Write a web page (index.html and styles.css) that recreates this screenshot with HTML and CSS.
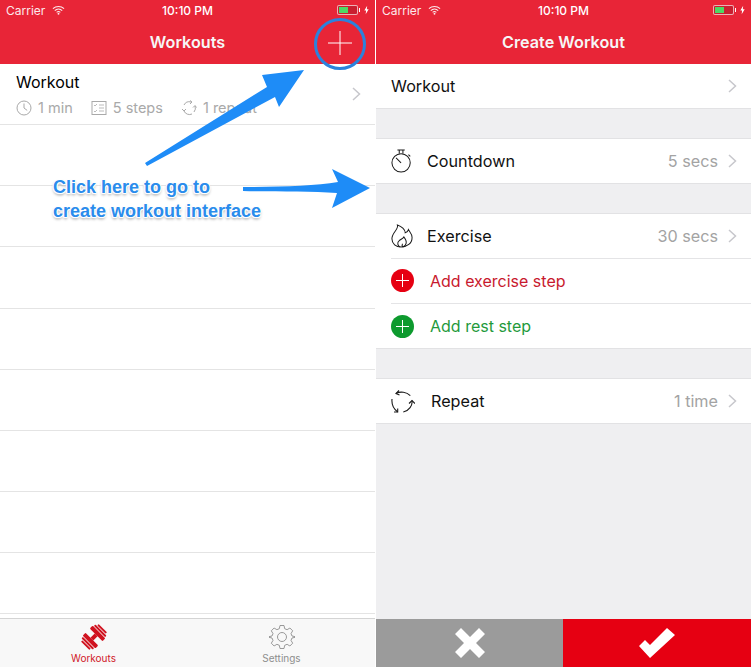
FILE: index.html
```html
<!DOCTYPE html>
<html>
<head>
    <title>Workouts</title>
    <link rel="stylesheet" href="styles.css">
</head>
<body>
<div class="shot">

    <!-- left phone: workouts list -->
    <div class="phone phone-left">
        <div class="statusbar">
            <div class="status-left">
                <span>Carrier</span>
                <svg class="wifi" viewBox="0 0 14 10"><path d="M1 3.6C4.4.4 9.6.4 13 3.6M3 5.6c2.3-2.1 5.7-2.1 8 0M5 7.5c1.2-1 2.8-1 4 0" fill="none" stroke="#fff" stroke-width="1.2"/><circle cx="7" cy="9" r="1" fill="#fff"/></svg>
            </div>
            <div class="status-time">10:10 PM</div>
            <div class="status-right">
                <div class="battery"><div class="battery-level"></div></div>
                <div class="battery-tip"></div>
                <svg class="bolt" viewBox="0 0 6 10"><path d="M3.8 0 .4 5.6h2.1L2 10l3.6-6H3.4z" fill="#fff"/></svg>
            </div>
        </div>
        <div class="navbar">Workouts</div>
        <svg class="nav-plus" viewBox="0 0 24 24"><path d="M12 0v24M0 12h24" stroke="#fff" stroke-width="1"/></svg>

        <div class="list">
            <div class="workout-row">
                <div class="workout-info">
                    <div class="workout-name">Workout</div>
                    <div class="workout-meta">
                        <span class="meta-item">
                            <svg class="meta-icon" viewBox="0 0 16 16"><circle cx="8" cy="8" r="7" fill="none" stroke="#a9a9a9"/><path d="M8 3.5V8l3.2 2.4" fill="none" stroke="#a9a9a9"/></svg>
                            1 min
                        </span>
                        <span class="meta-item">
                            <svg class="meta-icon" viewBox="0 0 16 16"><rect x="1" y="1.5" width="14" height="13" fill="none" stroke="#a9a9a9"/><path d="M3 5l1 1 2-2M3 11l1 1 2-2M8 5h5M8 8h5M8 11h5" fill="none" stroke="#a9a9a9" stroke-width=".8"/></svg>
                            5 steps
                        </span>
                        <span class="meta-item">
                            <svg class="meta-icon" viewBox="0 0 16 16"><path d="M3 5a6 6 0 0 1 7-3M14 6a6 6 0 0 1-1 6M11 14a6 6 0 0 1-8-3M9 .5 11 2 9 4M12 7.5l2-2 1.500 2M1 9l2 2 2-2" fill="none" stroke="#a9a9a9"/></svg>
                            1 repeat
                        </span>
                    </div>
                </div>
                <svg class="chevron" viewBox="0 0 9 14"><path d="M1 1l6.500 6L1 13" fill="none" stroke="#c7c7cc" stroke-width="1.500"/></svg>
            </div>
            <div class="empty-row"></div>
            <div class="empty-row"></div>
            <div class="empty-row tall"></div>
            <div class="empty-row"></div>
            <div class="empty-row"></div>
            <div class="empty-row"></div>
            <div class="empty-row"></div>
            <div class="empty-row"></div>
        </div>

        <div class="tabbar">
            <div class="tab tab-active">
                <svg class="tab-icon" viewBox="0 0 26 26">
                    <g transform="rotate(-45 13 13)" fill="#d0121f">
                        <rect x="10" y="11" width="6" height="4"/>
                        <rect x="0.500" y="7" width="2" height="12" rx="1"/>
                        <rect x="3.200" y="5" width="2" height="16" rx="1"/>
                        <rect x="5.900" y="4" width="4.100" height="18" rx="1"/>
                        <rect x="16" y="4" width="4.100" height="18" rx="1"/>
                        <rect x="20.800" y="5" width="2" height="16" rx="1"/>
                        <rect x="23.500" y="7" width="2" height="12" rx="1"/>
                    </g>
                </svg>
                <span>Workouts</span>
            </div>
            <div class="tab">
                <svg class="tab-icon" viewBox="0 0 26 26">
                    <circle cx="13" cy="13" r="4.500" fill="none" stroke="#8e8e8e" stroke-width=".9"/>
                    <path d="M11 1.500h4l.7 3.200 2.400 1 2.800-1.700 2.800 2.800-1.700 2.800 1 2.400 3.200.7v.6l-3.200.7-1 2.400 1.700 2.800-2.800 2.800-2.800-1.700-2.400 1-.7 3.200h-4l-.7-3.200-2.400-1-2.800 1.700-2.800-2.800 1.700-2.800-1-2.400-3.200-.7v-.6l3.200-.7 1-2.400-1.700-2.800 2.800-2.800 2.800 1.700 2.400-1z" fill="none" stroke="#8e8e8e" stroke-width=".9"/>
                </svg>
                <span>Settings</span>
            </div>
        </div>
    </div>

    <!-- right phone: create workout -->
    <div class="phone phone-right">
        <div class="statusbar">
            <div class="status-left">
                <span>Carrier</span>
                <svg class="wifi" viewBox="0 0 14 10"><path d="M1 3.6C4.4.4 9.6.4 13 3.6M3 5.6c2.3-2.1 5.7-2.1 8 0M5 7.5c1.2-1 2.8-1 4 0" fill="none" stroke="#fff" stroke-width="1.2"/><circle cx="7" cy="9" r="1" fill="#fff"/></svg>
            </div>
            <div class="status-time">10:10 PM</div>
            <div class="status-right">
                <div class="battery"><div class="battery-level"></div></div>
                <div class="battery-tip"></div>
                <svg class="bolt" viewBox="0 0 6 10"><path d="M3.8 0 .4 5.6h2.1L2 10l3.6-6H3.4z" fill="#fff"/></svg>
            </div>
        </div>
        <div class="navbar">Create Workout</div>

        <div class="form">
            <div class="group">
                <div class="row">
                    <span class="row-title">Workout</span>
                    <svg class="chevron" viewBox="0 0 9 14"><path d="M1 1l6.500 6L1 13" fill="none" stroke="#c7c7cc" stroke-width="1.500"/></svg>
                </div>
            </div>

            <div class="group">
                <div class="row">
                    <svg class="row-icon" viewBox="0 0 24 26">
                        <circle cx="11" cy="15" r="10" fill="none" stroke="#1a1a1a" stroke-width="1.100"/>
                        <path d="M7 1h8M9 1v4M13 1v4M19 6l2 2M5.500 9.500 11 15" fill="none" stroke="#1a1a1a" stroke-width="1.100"/>
                    </svg>
                    <span class="row-title">Countdown</span>
                    <span class="row-value">5 secs</span>
                    <svg class="chevron" viewBox="0 0 9 14"><path d="M1 1l6.500 6L1 13" fill="none" stroke="#c7c7cc" stroke-width="1.500"/></svg>
                </div>
            </div>

            <div class="group">
                <div class="row row-line">
                    <svg class="row-icon" viewBox="0 0 24 26">
                        <path d="M7 1C8.500 6 1 9 1 16c0 5.500 4.500 9 10 9 6.500 0 12-4 12-10.500 0-3.500-2.500-6-4-8.500-.5 2-2 3-3.500 3.500C15.500 6 11.500 2.500 7 1z" fill="none" stroke="#1a1a1a" stroke-width="1.100"/>
                        <path d="M10 25c-3-1-3.500-5-1-7 1.500-1.500 4-2 5-4 2 2.500 3 5 2.500 7-.5 2-2 3.500-3.500 4-1-1-1-2.500-.5-3.500" fill="none" stroke="#1a1a1a" stroke-width="1.100"/>
                    </svg>
                    <span class="row-title">Exercise</span>
                    <span class="row-value">30 secs</span>
                    <svg class="chevron" viewBox="0 0 9 14"><path d="M1 1l6.500 6L1 13" fill="none" stroke="#c7c7cc" stroke-width="1.500"/></svg>
                </div>
                <div class="row row-line">
                    <div class="add-dot dot-red"></div>
                    <span class="add-label label-red">Add exercise step</span>
                </div>
                <div class="row">
                    <div class="add-dot dot-green"></div>
                    <span class="add-label label-green">Add rest step</span>
                </div>
            </div>

            <div class="group">
                <div class="row">
                    <svg class="repeat-icon" viewBox="0 0 24 25">
                        <path d="M5 4.500C9.500 2 15.500 3 19.300 6.700M21 11.700c.8 4.500-3 10-8.700 11.300M6.700 23C2.500 20 .5 15 1 10" fill="none" stroke="#1a1a1a" stroke-width="1.100"/>
                        <path d="M8 1.500 5 4.500l3.500 1.500M18 14.500l3-3 3 3M3 23h3.700v-3.500" fill="none" stroke="#1a1a1a" stroke-width="1.100"/>
                    </svg>
                    <span class="row-title">Repeat</span>
                    <span class="row-value">1 time</span>
                    <svg class="chevron" viewBox="0 0 9 14"><path d="M1 1l6.500 6L1 13" fill="none" stroke="#c7c7cc" stroke-width="1.500"/></svg>
                </div>
            </div>
        </div>

        <div class="actions">
            <div class="action action-cancel">
                <svg class="action-icon" viewBox="0 0 30 30"><path d="M0 6l6-6 9 9 9-9 6 6-9 9 9 9-6 6-9-9-9 9-6-6 9-9z" fill="#fff"/></svg>
            </div>
            <div class="action action-ok">
                <svg class="action-icon" viewBox="0 0 36 30"><path d="M0 18l6-6 5 5L28 0l8 7-25 23z" fill="#fff"/></svg>
            </div>
        </div>
    </div>

    <!-- annotation drawn over the screenshots -->
    <svg class="markup" viewBox="0 0 751 667">
        <circle cx="340" cy="44" r="24.500" fill="none" stroke="#2c82dc" stroke-width="3"/>
        <path d="M145 163 267 87 262 75 304 70 279 107 275 97 147 166z" fill="#1e8cf7"/>
        <path d="M243 187C280 187 315 186 338 182L332 169 370 188 332 208 337 193C310 191 275 192 243 191z" fill="#1e8cf7"/>
    </svg>
    <div class="callout">Click here to go to<br>create workout interface</div>
</div>
</body>
</html>
```

FILE: styles.css
```css
html, body {
    margin: 0;
    padding: 0;
    background-color: white;
}
.shot {
    position: relative;
    display: flex;
    width: 751px;
    height: 667px;
    overflow: hidden;
    font-family: Inter, "Liberation Sans", sans-serif;
}
.phone {
    position: relative;
    display: flex;
    flex-direction: column;
    height: 667px;
}
.phone-left {
    width: 375px;
    border-right: 1px solid white;
    background-color: white;
}
.phone-right {
    width: 375px;
    background-color: #efeff1;
}

/* status bar + nav bar */
.statusbar {
    display: flex;
    align-items: center;
    justify-content: space-between;
    height: 20px;
    padding: 0 6px 0 6px;
    background-color: #e82537;
    color: white;
    font-size: 12px;
    position: relative;
}
.status-left {
    display: flex;
    align-items: center;
    gap: 7px;
    opacity: 0.9;
}
.wifi {
    width: 13px;
    height: 10px;
}
.status-time {
    position: absolute;
    left: 0;
    right: 0;
    text-align: center;
    font-weight: 500;
}
.status-right {
    display: flex;
    align-items: center;
}
.battery {
    width: 17px;
    height: 6px;
    border: 1px solid rgba(255,255,255,0.65);
    border-radius: 2px;
    padding: 1px;
    background-color: #c91f30;
}
.battery-level {
    width: 9px;
    height: 6px;
    background-color: #4cd964;
}
.battery-tip {
    width: 1px;
    height: 4px;
    background-color: white;
    margin: 0 4px 0 1px;
}
.bolt {
    width: 5px;
    height: 10px;
}
.navbar {
    height: 44px;
    line-height: 44px;
    text-align: center;
    background-color: #e82537;
    color: #f6f6f6;
    font-size: 16.2px;
    font-weight: 600;
}
.nav-plus {
    position: absolute;
    left: 328px;
    top: 31px;
    width: 24px;
    height: 24px;
}

/* left list */
.list {
    flex: 1;
}
.workout-row {
    display: flex;
    align-items: center;
    justify-content: space-between;
    height: 60px;
    padding: 0 14px 0 16px;
    border-bottom: 1px solid #e4e4e4;
}
.workout-name {
    font-size: 16px;
    color: black;
    margin-bottom: 7px;
}
.workout-meta {
    display: flex;
    gap: 18px;
    font-size: 14.5px;
    color: #a9a9a9;
}
.meta-item {
    display: flex;
    align-items: center;
    gap: 6px;
}
.meta-icon {
    width: 16px;
    height: 16px;
}
.chevron {
    width: 9px;
    height: 14px;
    flex: none;
}
.empty-row {
    height: 60px;
    border-bottom: 1px solid #e4e4e4;
}
.empty-row.tall {
    height: 61px;
}

/* tab bar */
.tabbar {
    display: flex;
    height: 48px;
    border-top: 1px solid #d4d4d4;
    background-color: #f8f8f8;
}
.tab {
    flex: 1;
    display: flex;
    flex-direction: column;
    align-items: center;
    padding-top: 5px;
    box-sizing: border-box;
    font-size: 10px;
    color: #8e8e8e;
}
.tab-active {
    color: #d0182a;
    padding-right: 1px;
}
.tab-icon {
    width: 26px;
    height: 26px;
    margin-bottom: 2px;
}

/* right form */
.form {
    flex: 1;
}
.group {
    background-color: white;
    border-top: 1px solid #e2e2e4;
    border-bottom: 1px solid #e2e2e4;
    margin-bottom: 29px;
}
.group:first-child {
    border-top: none;
}
.row {
    display: flex;
    align-items: center;
    height: 44px;
    padding: 0 14px 0 15px;
    position: relative;
}
.row-line::after {
    content: "";
    position: absolute;
    left: 15px;
    right: 0;
    bottom: 0;
    height: 1px;
    background-color: #e4e4e6;
}
.row-line {
    height: 45px;
    padding-bottom: 2px;
    box-sizing: border-box;
}
.row-icon {
    width: 22px;
    height: 24px;
    margin-right: 14px;
    flex: none;
}
.repeat-icon {
    width: 24px;
    height: 25px;
    margin-right: 16px;
    flex: none;
}
.row-title {
    flex: 1;
    font-size: 16.2px;
    color: #111;
}
.row-value {
    font-size: 16.2px;
    color: #a3a3a3;
    margin-right: 10px;
}
.add-dot {
    position: relative;
    width: 23px;
    height: 23px;
    border-radius: 50%;
    margin-right: 16px;
    flex: none;
}
.add-dot::before, .add-dot::after {
    content: "";
    position: absolute;
    background-color: white;
}
.add-dot::before {
    left: 5px;
    right: 5px;
    top: 11px;
    height: 1px;
}
.add-dot::after {
    top: 5px;
    bottom: 5px;
    left: 11px;
    width: 1px;
}
.dot-red {
    background-color: #e60012;
}
.dot-green {
    background-color: #0d9a2e;
}
.add-label {
    font-size: 16px;
}
.label-red {
    color: #c8192e;
}
.label-green {
    color: #1f9a3c;
}

/* bottom buttons */
.actions {
    display: flex;
    height: 48px;
}
.action {
    display: flex;
    align-items: center;
    justify-content: center;
}
.action-cancel {
    width: 187px;
    background-color: #9b9b9b;
}
.action-ok {
    flex: 1;
    background-color: #e60012;
}
.action-cancel .action-icon {
    width: 30px;
    height: 30px;
}
.action-ok .action-icon {
    width: 36px;
    height: 30px;
}

/* annotation */
.markup {
    position: absolute;
    left: 0;
    top: 0;
    width: 751px;
    height: 667px;
}
.callout {
    position: absolute;
    left: 53px;
    top: 175px;
    font-family: "Liberation Sans", Arial, sans-serif;
    font-size: 18px;
    font-weight: bold;
    line-height: 24px;
    color: #2a8cec;
    text-shadow: 1px 0 0 white, -1px 0 0 white, 0 1px 0 white, 0 -1px 0 white, 1px 1px 1px white, -1px 1px 1px white, 0 2px 3px rgba(0,0,0,0.45);
}
```
